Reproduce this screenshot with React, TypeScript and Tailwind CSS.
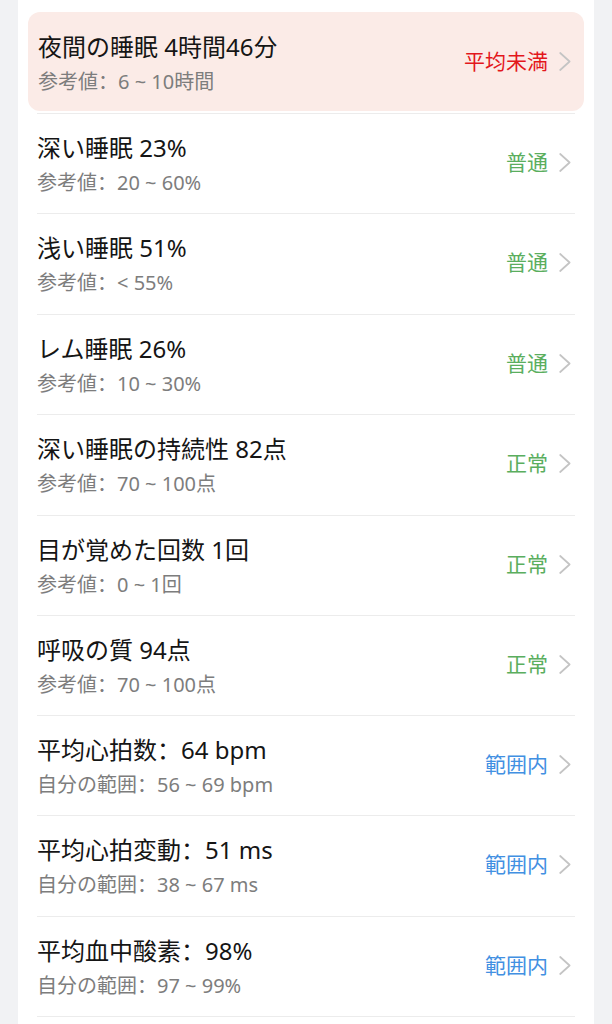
type Item = {
  title: string;
  sub: string;
  status: string;
  tone: "red" | "green" | "blue";
  tall?: boolean;
};

const ITEMS: Item[] = [
  { title: "夜間の睡眠 4時間46分", sub: "参考値：6 ~ 10時間", status: "平均未満", tone: "red" },
  { title: "深い睡眠 23%", sub: "参考値：20 ~ 60%", status: "普通", tone: "green" },
  { title: "浅い睡眠 51%", sub: "参考値：< 55%", status: "普通", tone: "green", tall: true },
  { title: "レム睡眠 26%", sub: "参考値：10 ~ 30%", status: "普通", tone: "green" },
  { title: "深い睡眠の持続性 82点", sub: "参考値：70 ~ 100点", status: "正常", tone: "green", tall: true },
  { title: "目が覚めた回数 1回", sub: "参考値：0 ~ 1回", status: "正常", tone: "green" },
  { title: "呼吸の質 94点", sub: "参考値：70 ~ 100点", status: "正常", tone: "green" },
  { title: "平均心拍数：64 bpm", sub: "自分の範囲：56 ~ 69 bpm", status: "範囲内", tone: "blue" },
  { title: "平均心拍変動：51 ms", sub: "自分の範囲：38 ~ 67 ms", status: "範囲内", tone: "blue", tall: true },
  { title: "平均血中酸素：98%", sub: "自分の範囲：97 ~ 99%", status: "範囲内", tone: "blue" },
];

const TONE = {
  red: "text-[#e3171c]",
  green: "text-[#5aae5e]",
  blue: "text-[#4290e2]",
};

function Chevron() {
  return (
    <svg width="12" height="19" viewBox="0 0 12 19" fill="none" className="shrink-0">
      <polyline
        points="1.2,1 10.6,9.5 1.2,18"
        stroke="#c4c4c4"
        strokeWidth="1.7"
        strokeLinecap="round"
        strokeLinejoin="round"
      />
    </svg>
  );
}

function Row({ item }: { item: Item }) {
  return (
    <div className="flex items-start pr-[4px]">
      <div className="flex min-w-0 flex-1 flex-col">
        <p className="text-[24px] leading-[30px] text-[#151515]">{item.title}</p>
        <p className="mt-[7px] text-[20px] leading-[26px] text-[#7d7d7d]">{item.sub}</p>
      </div>
      <div className="mt-[15px] flex h-[28px] items-center">
        <span className={`text-[21px] leading-[28px] ${TONE[item.tone]}`}>{item.status}</span>
        <span className="ml-[11px] flex items-center">
          <Chevron />
        </span>
      </div>
    </div>
  );
}

export default function App() {
  const [first, ...rest] = ITEMS;
  return (
    <div
      className="h-[1024px] overflow-hidden bg-[#f1f2f4] px-[18px]"
      style={{ fontFamily: '"Noto Sans", "Noto Sans CJK SC", "Noto Sans CJK JP", sans-serif' }}
    >
      <div className="h-full bg-white px-[19px]">
        {/* highlighted row */}
        <div className="border-b border-[#ececec] pt-[12px] pb-[2px]">
          <div className="-mx-[9px] h-[99px] rounded-xl bg-[#fbebe7] pt-[20px] pl-[10px] pr-[9px]">
            <Row item={first} />
          </div>
        </div>
        {rest.map((item) => (
          <div
            key={item.title}
            className={`${item.tall ? "h-[101px]" : "h-[100px]"} border-b border-[#ececec] pt-[19px]`}
          >
            <Row item={item} />
          </div>
        ))}
      </div>
    </div>
  );
}
